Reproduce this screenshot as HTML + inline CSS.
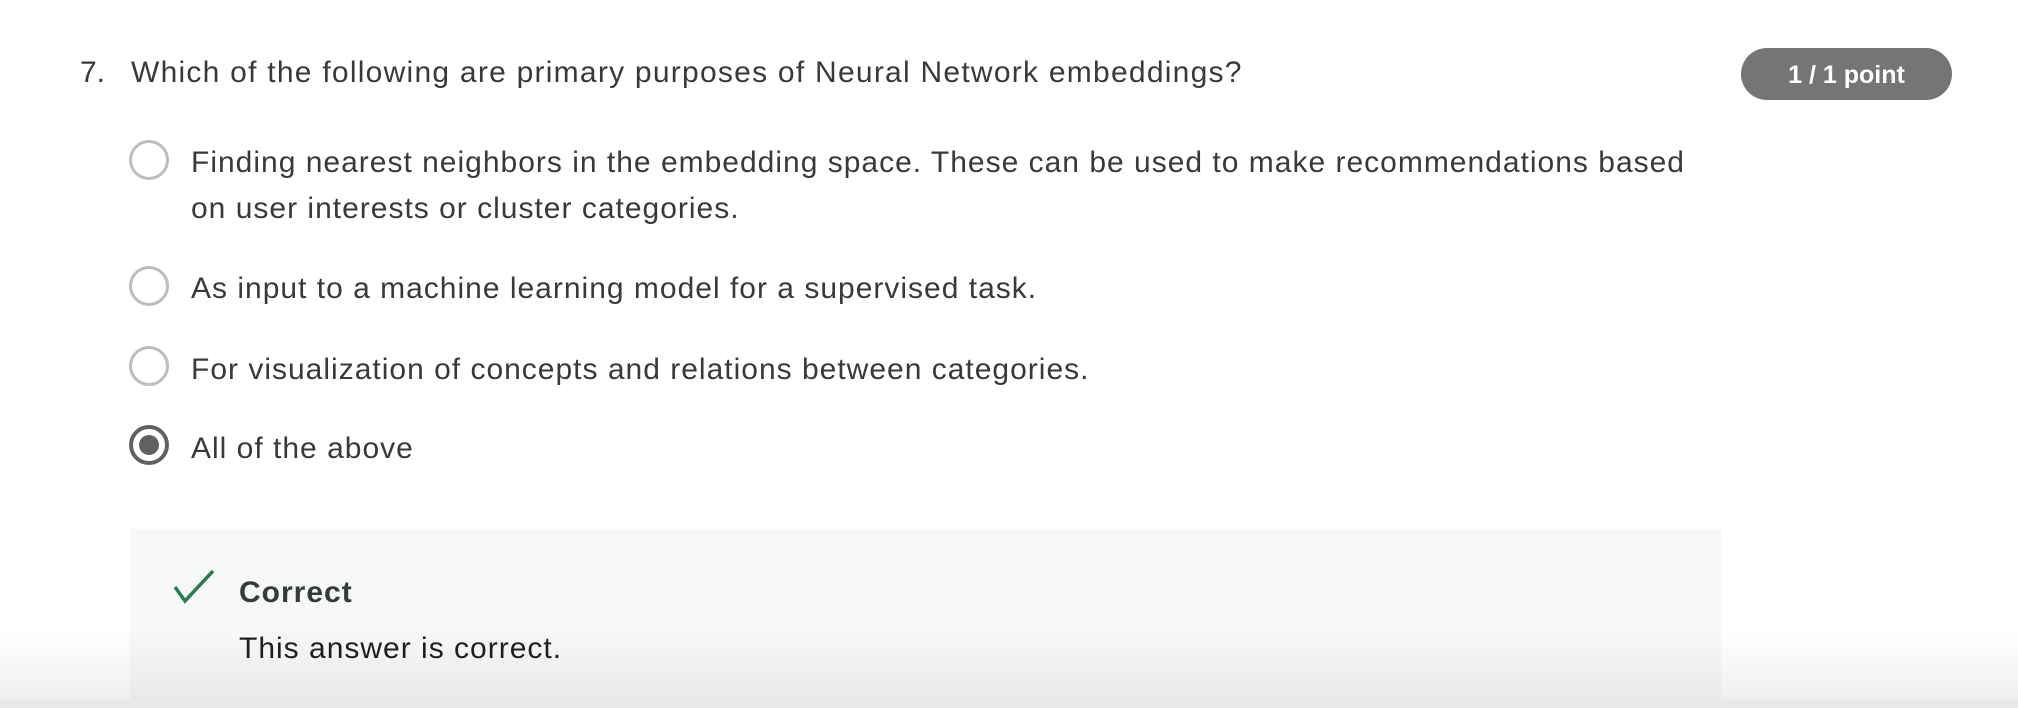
<!DOCTYPE html>
<html><head><style>
body{margin:0;width:2018px;height:708px;background:#fff;position:relative;overflow:hidden;font-family:"Liberation Sans",sans-serif;color:#373a3c}
.t{position:absolute;white-space:nowrap;font-size:30px;line-height:45px;letter-spacing:1px}
.r{position:absolute;left:129px;width:34px;height:34px;border:3px solid #bdbdbd;border-radius:50%}
</style></head><body>
<div class="t" style="left:80px;top:50px;letter-spacing:0">7.</div>
<div class="t" style="left:131px;top:50px;letter-spacing:1.25px">Which of the following are primary purposes of Neural Network embeddings?</div>
<div style="position:absolute;left:1741px;top:48px;width:211px;height:52px;border-radius:26px;background:#757575;color:#fff;font-weight:bold;font-size:25px;line-height:54px;text-align:center">1 / 1 point</div>
<div class="r" style="top:140px"></div>
<div class="t" style="left:191px;top:140px">Finding nearest neighbors in the embedding space. These can be used to make recommendations based</div>
<div class="t" style="left:191px;top:186px">on user interests or cluster categories.</div>
<div class="r" style="top:266px"></div>
<div class="t" style="left:191px;top:266px">As input to a machine learning model for a supervised task.</div>
<div class="r" style="top:346px"></div>
<div class="t" style="left:191px;top:347px">For visualization of concepts and relations between categories.</div>
<div class="r" style="top:425px;border-color:#616161;border-width:4px;width:32px;height:32px"><div style="position:absolute;left:6px;top:6px;width:20px;height:20px;border-radius:50%;background:#616161"></div></div>
<div class="t" style="left:191px;top:426px">All of the above</div>
<div style="position:absolute;left:130px;top:529px;width:1591px;height:179px;background:#f7f9f9"></div>
<svg style="position:absolute;left:172px;top:568px" width="46" height="38"><path d="M3 19 L13 33 L41 3" fill="none" stroke="#2e7a4f" stroke-width="3.5"/></svg>
<div class="t" style="left:239px;top:570px;font-weight:bold">Correct</div>
<div class="t" style="left:239px;top:626px;color:#1f1f1f">This answer is correct.</div>
<div style="position:absolute;left:0;top:630px;width:2018px;height:78px;background:linear-gradient(rgba(0,0,0,0),rgba(0,0,0,0.07))"></div>
<div style="position:absolute;left:0;top:700px;width:2018px;height:8px;background:#e8e9e9"></div>
</body></html>
